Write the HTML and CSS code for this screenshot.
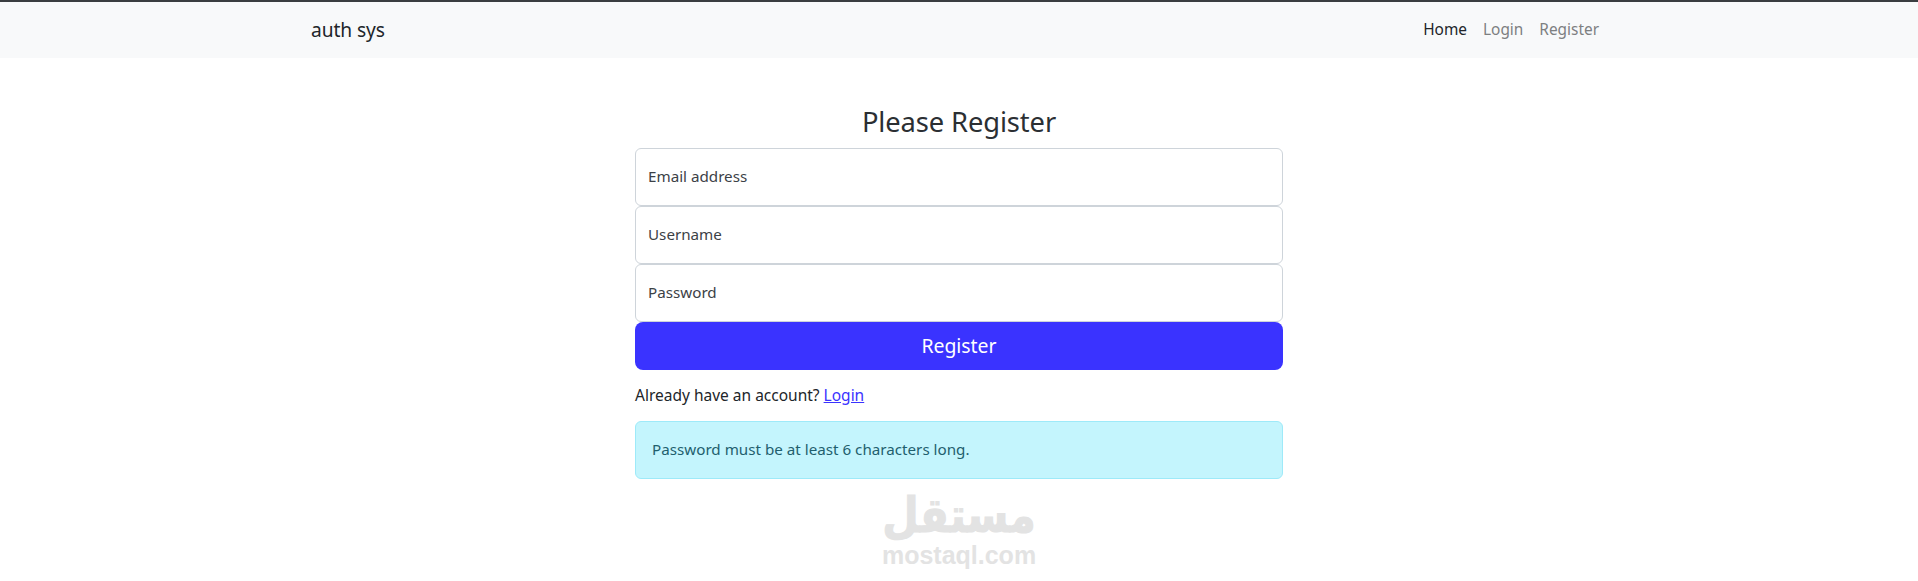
FILE: index.html
```html
<!DOCTYPE html>
<html lang="en">
<head>
<meta charset="utf-8">
<title>auth sys</title>
<link rel="stylesheet" href="styles.css">
</head>
<body>
<nav class="navbar">
  <div class="nav-inner">
    <a class="brand" href="#">auth sys</a>
    <ul class="nav-links">
      <li><a class="nav-link active" href="#">Home</a></li>
      <li><a class="nav-link" href="#">Login</a></li>
      <li><a class="nav-link" href="#">Register</a></li>
    </ul>
  </div>
</nav>
<main class="form-wrap">
  <h1 class="title">Please Register</h1>
  <form class="form">
    <input class="field" type="email" placeholder="Email address">
    <input class="field" type="text" placeholder="Username">
    <input class="field" type="password" placeholder="Password">
    <button class="submit" type="button">Register</button>
  </form>
  <p class="switch">Already have an account? <a href="#">Login</a></p>
  <div class="alert">Password must be at least 6 characters long.</div>
</main>
<div class="watermark">
  <span class="wm-ar" lang="ar" dir="rtl">مستقل</span>
  <span class="wm-en">mostaql.com</span>
</div>
</body>
</html>
```
FILE: styles.css
```css
* { box-sizing: border-box; }
html, body { margin: 0; height: 581px; overflow: hidden; }
body {
  background: #fff;
  color: #212529;
  font-family: "Noto Sans", "Open Sans", sans-serif;
  font-size: 16px;
  line-height: 24px;
  position: relative;
  border-top: 2px solid #3a3d40;
}
.navbar { background: #f8f9fa; height: 56px; }
.nav-inner {
  width: 1320px;
  height: 100%;
  margin: 0 auto;
  padding: 0 12px;
  display: flex;
  align-items: center;
  justify-content: space-between;
}
.brand { color: #212529; font-size: 19.2px; text-decoration: none; letter-spacing: -0.1px; }
.nav-links { display: flex; list-style: none; margin: 0 0 1px; padding: 0; }
.nav-link { display: block; padding: 0 8px; color: #7d7f81; text-decoration: none; font-size: 15.4px; }
.nav-link.active { color: #212529; }
.form-wrap { width: 648px; margin: 0 auto; padding-top: 42px; }
.title { margin: 0 0 4px; height: 44px; font-size: 27.3px; line-height: 44px; font-weight: 400; text-align: center; letter-spacing: -0.1px; color: #2b2f33; }
.form { display: flex; flex-direction: column; }
.field {
  height: 58px;
  padding: 0 12px 3px;
  border: 1px solid #ced4da;
  border-radius: 6px;
  background: #fff;
  font: inherit;
  font-size: 15.2px;
  color: #212529;
}
.field::placeholder { color: #3c4146; opacity: 1; }
.submit {
  height: 48px;
  border: 0;
  border-radius: 8px;
  background: #3a33ff;
  color: #fff;
  font: inherit;
  font-size: 19.4px;
}
.switch { margin: 13px 0 0; height: 24px; font-size: 15.5px; }
.switch a { color: #3a33ff; }
.alert {
  margin-top: 14px;
  height: 58px;
  padding: 14px 16px;
  border: 1px solid #9eeaf9;
  border-radius: 6px;
  background: #c4f5fd;
  color: #1f5f6e;
  font-size: 15.2px;
  line-height: 26px;
}
.watermark {
  position: absolute;
  left: 882px;
  top: 488px;
  width: 154px;
  display: flex;
  flex-direction: column;
  align-items: center;
  color: #e3e3e3;
  font-weight: 700;
}
.wm-ar { font-family: "DejaVu Sans", sans-serif; font-size: 42px; line-height: 52px; height: 52px; -webkit-text-stroke: 1px #e3e3e3; transform: scaleY(1.15); }
.wm-en { font-family: "Liberation Sans", sans-serif; font-size: 25px; line-height: 26px; }
```
